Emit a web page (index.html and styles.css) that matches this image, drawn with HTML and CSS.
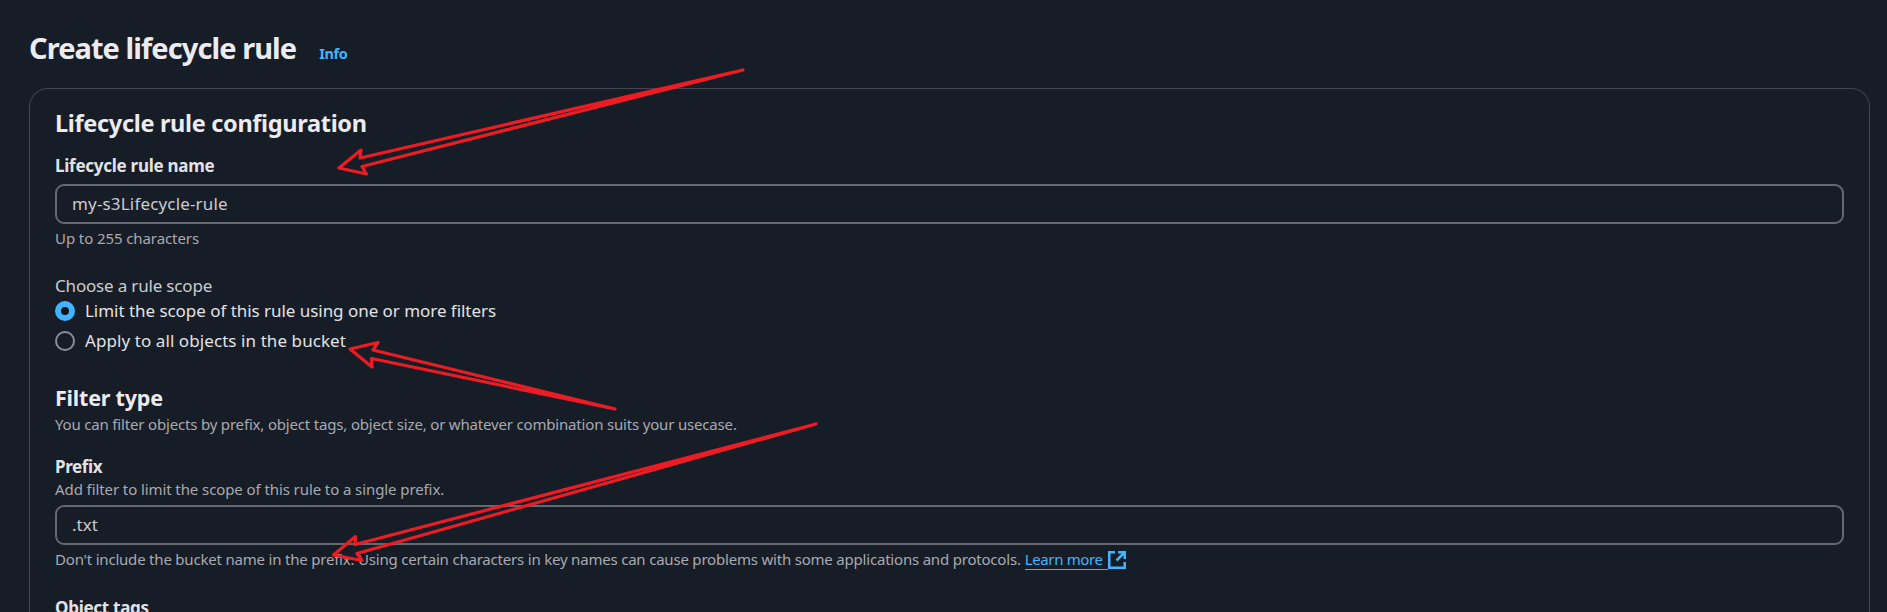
FILE: index.html
```
<!DOCTYPE html>
<html lang="en">
<head>
<meta charset="utf-8">
<title>Create lifecycle rule</title>
<link rel="stylesheet" href="styles.css">
</head>
<body>
<main class="page">
  <header class="page-header">
    <h1 class="page-title">Create lifecycle rule</h1>
    <a class="info">Info</a>
  </header>
  <section class="card">
    <h2 class="card-title">Lifecycle rule configuration</h2>
    <div class="field field-name">
      <label class="label label-name" for="name">Lifecycle rule name</label>
      <input class="input input-name" id="name" type="text" value="my-s3Lifecycle-rule">
      <p class="hint hint-name">Up to 255 characters</p>
    </div>
    <div class="scope">
      <p class="scope-title">Choose a rule scope</p>
      <div class="option option-limit"><span class="radio radio-on"></span><span>Limit the scope of this rule using one or more filters</span></div>
      <div class="option option-all"><span class="radio"></span><span>Apply to all objects in the bucket</span></div>
    </div>
    <h3 class="filter-title">Filter type</h3>
    <p class="hint filter-hint">You can filter objects by prefix, object tags, object size, or whatever combination suits your usecase.</p>
    <div class="field field-prefix">
      <label class="label label-prefix" for="prefix">Prefix</label>
      <p class="hint prefix-hint">Add filter to limit the scope of this rule to a single prefix.</p>
      <input class="input input-prefix" id="prefix" type="text" value=".txt">
      <p class="hint prefix-note"><span>Don't include the bucket name in the prefix. Using certain characters in key names can cause problems with some applications and protocols.</span><a class="learn">Learn more</a><svg class="external" width="18" height="18" viewBox="0 0 18 18" fill="none" stroke="currentColor" stroke-width="2.5"><path d="M7 1.25H1.25V16.75H16.75V11M10 1.25H16.75V8M16.500 1.500L8.500 9.500"/></svg></p>
    </div>
    <p class="label label-tags">Object tags</p>
  </section>
</main>
<svg class="arrows" width="1887" height="612" viewBox="0 0 1887 612" fill="none" stroke="#ed1c24" stroke-width="3.2" stroke-linejoin="round">
  <path d="M743 70L360 158L361 150L339 168L366.500 174L362 166.500Z"/>
  <path d="M615 409L373 350L378 342.500L350 349L372 367L371.500 358.500Z"/>
  <path d="M816 424L355 544.500L355.500 536.500L333.500 555L362 560.500L357 553.500Z"/>
</svg>
</body>
</html>
```
FILE: styles.css
```
* { box-sizing: border-box; }
body {
  margin: 0;
  background: #161d26;
  font-family: "Noto Sans", sans-serif;
  color: #e2e2e7;
}
h1, h2, h3, p { margin: 0; }
.page { display: flex; flex-direction: column; height: 612px; padding: 30px 17px 0 29px; overflow: hidden; }
.page-header { display: flex; align-items: baseline; gap: 23px; flex: none; height: 58px; }
.page-title { font-size: 29px; line-height: 36px; font-weight: 700; letter-spacing: -0.93px; color: #ebebf0; }
.info { font-size: 14.5px; font-weight: 700; letter-spacing: -0.35px; color: #42b4ff; }
.card {
  flex: 1;
  min-height: 0;
  padding: 19px 25px 0;
  border: 1px solid #424650;
  border-bottom: 0;
  border-radius: 19px 19px 0 0;
  overflow: hidden;
}
.card-title { font-size: 23.5px; line-height: 30px; letter-spacing: -0.32px; color: #ebebf0; }
.field { display: flex; flex-direction: column; }
.field-name { margin-top: 16px; }
.label { font-size: 17px; line-height: 24px; font-weight: 700; }
.label-name { letter-spacing: -0.26px; }
.label-prefix { letter-spacing: -0.38px; }
.label-tags { margin-top: 26px; letter-spacing: -0.27px; }
.input {
  width: 100%;
  height: 40px;
  padding: 0 15px 2px;
  border: 2px solid #656871;
  border-radius: 9px;
  background: #161d26;
  color: #cbcbd2;
  font: 17px "Noto Sans", sans-serif;
}
.input-name { margin-top: 6px; letter-spacing: 0.17px; }
.input-prefix { margin-top: 6px; }
.hint { font-size: 15px; line-height: 20px; letter-spacing: -0.177px; color: #a9a9b1; white-space: nowrap; }
.hint-name { margin-top: 4px; letter-spacing: -0.09px; }
.scope { margin-top: 26px; font-size: 17px; line-height: 24px; }
.scope-title { color: #cbcbd2; letter-spacing: -0.18px; }
.option { display: flex; align-items: center; gap: 10px; }
.option-limit { margin-top: 1px; letter-spacing: -0.04px; }
.option-all { margin-top: 6px; letter-spacing: 0.08px; }
.radio { width: 20px; height: 20px; border: 2px solid #8c8c94; border-radius: 50%; }
.radio-on { border: 6px solid #42b4ff; background: #0f141a; }
.filter-title { margin-top: 31px; font-size: 21.5px; line-height: 28px; letter-spacing: -0.2px; color: #ebebf0; }
.filter-hint { margin-top: 2px; }
.field-prefix { margin-top: 21px; }
.prefix-hint { letter-spacing: -0.09px; }
.prefix-note { display: flex; margin-top: 4px; letter-spacing: -0.2px; }
.learn { height: 21px; margin-left: 4px; padding-right: 5px; border-bottom: 1px solid #42b4ff; letter-spacing: -0.36px; color: #42b4ff; }
.external { flex: none; margin-top: 2px; color: #42b4ff; }
.arrows { position: absolute; left: 0; top: 0; pointer-events: none; }
```
